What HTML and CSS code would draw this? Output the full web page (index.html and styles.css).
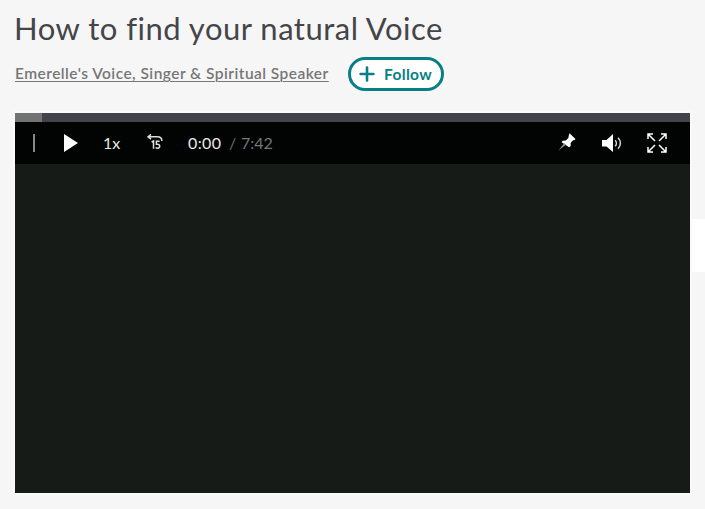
FILE: index.html
```html
<!DOCTYPE html>
<html lang="en">
<head>
<meta charset="utf-8">
<title>How to find your natural Voice</title>
<link rel="stylesheet" href="styles.css">
</head>
<body>
<main class="page">
  <h1 class="title">How to find your natural Voice</h1>
  <div class="byline">
    <a class="author" href="#">Emerelle's Voice, Singer &amp; Spiritual Speaker</a>
    <button class="follow">
      <svg class="plus" viewBox="0 0 16 16"><path d="M8 1.600v12.800M1.600 8h12.800"/></svg>
      <span>Follow</span>
    </button>
  </div>
  <section class="player">
    <div class="progress"><div class="buffered"></div></div>
    <div class="controls">
      <span class="divider"></span>
      <svg class="play" viewBox="0 0 14 18"><path d="M0 0 14 9 0 18z"/></svg>
      <span class="speed">1x</span>
      <svg class="rewind" viewBox="0 0 16 16">
        <path d="M1 2.800h9.500c2.900 0 4.300 1.500 4.500 4.200M4 .4 1 2.800 4 5.200"/>
        <path class="digits" d="M4.600 8 6.500 7v7.800M12.600 7.200H9.400v3c4.200-.7 4.200 4 1.300 4-1 0-1.600-.2-2.100-.7"/>
      </svg>
      <span class="time">0:00</span>
      <span class="slash">/</span>
      <span class="duration">7:42</span>
      <svg class="pin" viewBox="0 0 18 18"><path d="m11.500.3 6 5.700-1.200 1.300-1.200-.1-2.500 2.700.1 3.100-1.500 1.200L3.600 9.200l1-1.500 3.200-.2 2.700-2.700.1-1.500z"/><path class="needle" d="m6.300 10.300 1.600 1.500L.3 17.500z"/></svg>
      <svg class="volume" viewBox="0 0 20 18"><path d="M0 6h4.500L11 0v18l-6.500-5.500H0z"/><path class="wave" d="M13.200 6.200c1.500 1.700 1.500 4.400 0 6.100M16 3.800c3.200 3.100 3.200 7.800 0 10.900"/></svg>
      <svg class="expand" viewBox="0 0 20 20"><path d="M1 6V1h5M14 1h5v5M19 14v5h-5M6 19H1v-5M1.500 1.500l6.500 6.500M18.500 1.500L12 8M18.500 18.500L12 12M1.500 18.500L8 12"/></svg>
    </div>
  </section>
</main>
<div class="side-tab"></div>
</body>
</html>
```
FILE: styles.css
```css
body {
  margin: 0;
  height: 509px;
  overflow: hidden;
  background: #f6f6f6;
  font-family: Lato, "Liberation Sans", sans-serif;
}
.page { padding: 8px 15px 0; }
.title {
  margin: 0 0 0 -1px;
  width: max-content;
  font-size: 31px;
  line-height: 40px;
  font-weight: 400;
  letter-spacing: .5px;
  font-variant-ligatures: none;
  color: #444548;
}
.byline {
  display: flex;
  align-items: center;
  gap: 17px;
  height: 34px;
  margin-top: 9px;
}
.author {
  width: 316px;
  margin-top: -2px;
  white-space: nowrap;
  font-size: 15.5px;
  letter-spacing: .46px;
  font-weight: 600;
  color: #777;
  text-decoration-thickness: 1px;
  text-underline-offset: 2px;
}
.follow {
  display: flex;
  align-items: center;
  box-sizing: border-box;
  width: 96px;
  height: 34px;
  padding: 0 0 1px 8px;
  border: 3px solid #087f86;
  border-radius: 17px;
  background: #fff;
  color: #087f86;
  font: 700 15.5px Lato, sans-serif;
  letter-spacing: .35px;
  gap: 9px;
}
.plus { flex: none; width: 16px; height: 16px; fill: none; stroke: #087f86; stroke-width: 2.6; stroke-linecap: round; }
.player { height: 380px; margin-top: 22px; background: #171b18; box-shadow: 0 0 0 2px #fafafa; }
.progress { height: 9px; background: #43444b; }
.buffered { width: 27px; height: 9px; background: #737373; }
.controls {
  display: flex;
  align-items: center;
  box-sizing: border-box;
  height: 42px;
  padding: 0 23px 0 18px;
  background: #020403;
  color: #e8e8e8;
  font-size: 16px;
}
.controls span { flex: none; }
.controls svg { flex: none; fill: #fff; }
.divider { width: 2px; height: 18px; background: #888; }
.play { width: 14px; height: 18px; margin-left: 29px; }
.speed { width: 17px; margin: -2px 0 0 25px; }
.controls .rewind { width: 16px; height: 16px; margin: -2px 0 0 27px; fill: none; stroke: #ddd; stroke-width: 1.5; }
.time { width: 34px; margin-left: 25px; letter-spacing: .4px; }
.slash { width: 6px; margin-left: 7px; color: #6b6b6b; }
.duration { width: 31px; margin-left: 6px; color: #777; }
.time, .slash, .duration { margin-top: -1px; }
.pin { width: 18px; height: 18px; margin: -3px 0 0 286px; }
.needle { fill: #999; }
.volume { width: 20px; height: 18px; margin-left: 26px; }
.wave { fill: none; stroke: #ddd; stroke-width: 1.5; }
.controls .expand { width: 20px; height: 20px; margin-left: auto; fill: none; stroke: #fff; stroke-width: 1.5; }
.side-tab { position: absolute; top: 219px; right: 0; width: 13px; height: 53px; background: #fff; }
```
